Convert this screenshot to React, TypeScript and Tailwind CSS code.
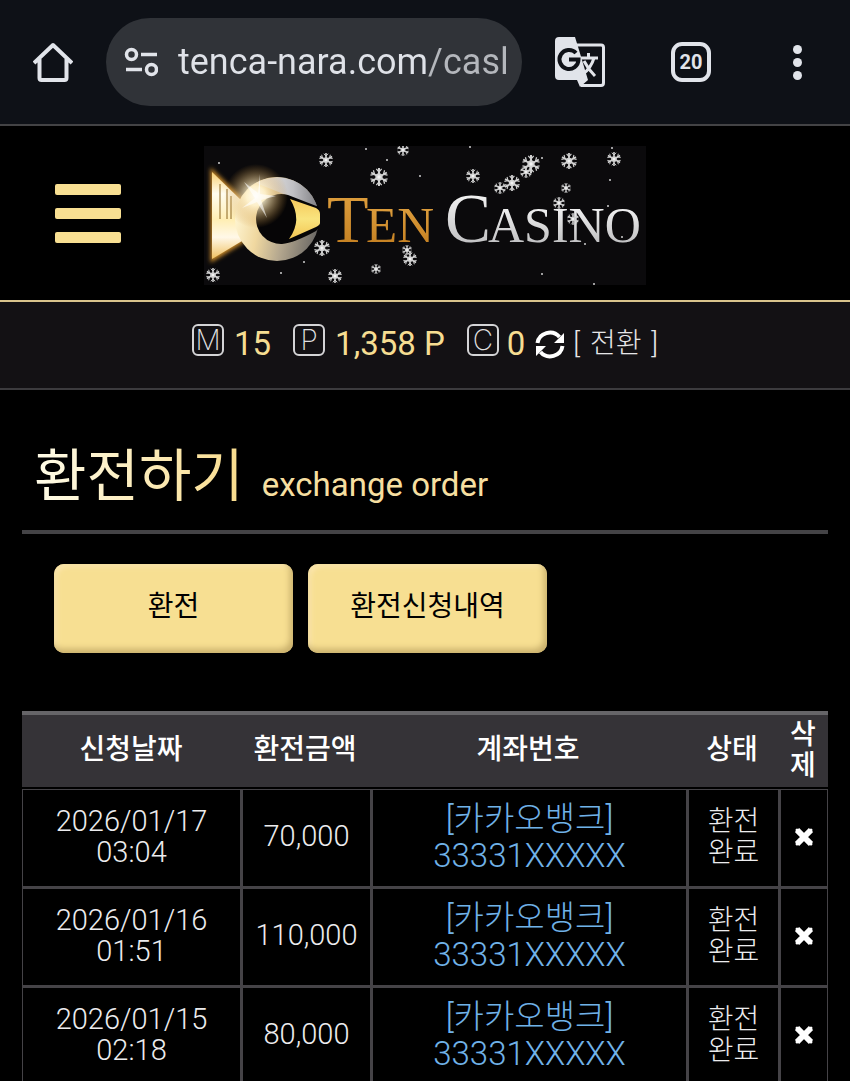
import React from 'react';

interface ExchangeOrder {
  id: number;
  date: string;
  time: string;
  amount: string;
  bank: string;
  account: string;
}

const orders: ExchangeOrder[] = [
  { id: 1, date: '2026/01/17', time: '03:04', amount: '70,000', bank: '[카카오뱅크]', account: '33331XXXXX' },
  { id: 2, date: '2026/01/16', time: '01:51', amount: '110,000', bank: '[카카오뱅크]', account: '33331XXXXX' },
  { id: 3, date: '2026/01/15', time: '02:18', amount: '80,000', bank: '[카카오뱅크]', account: '33331XXXXX' },
];

// x, y, radius
const flakes = [
  [122, 14, 7], [175, 31, 9], [199, 4, 6], [118, 102, 8], [9, 129, 7], [131, 130, 7],
  [172, 123, 5], [206, 113, 7], [203, 104, 5], [269, 30, 7], [308, 37, 8], [296, 42, 6],
  [327, 18, 9], [322, 26, 6], [365, 15, 8], [410, 13, 7], [362, 42, 5], [355, 57, 6], [369, 73, 6],
];

const dots = [
  [15, 17], [162, 3], [183, 14], [216, 30], [100, 116], [77, 127], [266, 1], [338, 12],
  [408, 2], [406, 34], [381, 98], [338, 128], [390, 138], [418, 91], [404, 60],
];

const Logo = () => (
  <svg viewBox="0 0 442 139" className="h-auto w-full max-w-[442px]" role="img" aria-label="Ten Casino">
    <defs>
      <linearGradient id="tail" x1="0" y1="0" x2="0" y2="1">
        <stop offset="0" stopColor="#f7cf72" />
        <stop offset="0.25" stopColor="#fffdf0" />
        <stop offset="0.55" stopColor="#ffeeb4" />
        <stop offset="0.75" stopColor="#fff8e8" />
        <stop offset="1" stopColor="#f0c060" />
      </linearGradient>
      <linearGradient id="ring" x1="0" y1="0.4" x2="1" y2="0.6">
        <stop offset="0" stopColor="#fff6d4" />
        <stop offset="0.3" stopColor="#f0d8a0" />
        <stop offset="0.6" stopColor="#b5a88f" />
        <stop offset="1" stopColor="#6b6865" />
      </linearGradient>
      <linearGradient id="steel" x1="0" y1="0" x2="1" y2="0">
        <stop offset="0" stopColor="#f4f2ee" />
        <stop offset="0.6" stopColor="#c0c0c4" />
        <stop offset="1" stopColor="#808084" />
      </linearGradient>
      <linearGradient id="eye" x1="0" y1="0" x2="0" y2="1">
        <stop offset="0" stopColor="#f6c95c" />
        <stop offset="0.5" stopColor="#f9e47e" />
        <stop offset="1" stopColor="#f3c653" />
      </linearGradient>
      <radialGradient id="shine">
        <stop offset="0" stopColor="#fff" />
        <stop offset="0.3" stopColor="#fff3cf" stopOpacity="0.9" />
        <stop offset="1" stopColor="#c98a2c" stopOpacity="0" />
      </radialGradient>
      <linearGradient id="gold" x1="0" y1="0" x2="0" y2="1">
        <stop offset="0" stopColor="#e3a544" />
        <stop offset="1" stopColor="#c07a1c" />
      </linearGradient>
      <linearGradient id="silver" x1="0" y1="0" x2="0" y2="1">
        <stop offset="0" stopColor="#fff" />
        <stop offset="1" stopColor="#b4b4b6" />
      </linearGradient>
      <filter id="glow" x="-20%" y="-20%" width="140%" height="140%">
        <feGaussianBlur stdDeviation="2" />
      </filter>
      <g id="flake" stroke="#d2d2d2" strokeWidth="0.22" fill="none">
        <path d="M0-1V1M-.87-.5 .87.5M-.87.5 .87-.5" />
        <path d="M-.3-.9 0-.55 .3-.9M-.3.9 0 .55 .3.9M-.95-.2-.5-.3-.62-.75M.95-.2.5-.3.62-.75M-.95.2-.5.3-.62.75M.95.2.5.3.62.75" strokeWidth="0.14" />
        <circle r="0.3" fill="#f2f2f2" />
      </g>
    </defs>
    <rect width="442" height="139" fill="#0b0a0c" />

    <path d="M8 25 38 54V96L8 114Z" fill="#c98a2c" stroke="#c98a2c" strokeWidth="3" filter="url(#glow)" />
    <path d="M8 26 38 55V95L8 113Z" fill="url(#tail)" />
    <path d="M16 38V73M23 43V73M27 50V73" stroke="#8a641e" strokeWidth="1" />
    <circle cx="73" cy="73" r="42" fill="url(#ring)" />
    <path d="M52 37A42 42 0 0 1 114 64L82 49Z" fill="url(#steel)" />
    <path d="M115 61 84 49A25 25 0 1 0 78 98Q90 97 112 85L115 82Z" fill="#060506" />
    <path d="M86 53 112 62Q116 64 116 68V77Q116 79 112 81L85 93Q99 74 86 53Z" fill="url(#eye)" />
    <ellipse cx="52" cy="50" rx="32" ry="32" fill="url(#shine)" opacity="0.9" />
    <path d="M56 28 56 48 72 50 57 54 63 72 53 56 38 62 51 52 40 36 54 47Z" fill="#fff" opacity="0.6" />

    <g fontFamily="'Liberation Serif', serif">
      <g fill="url(#gold)">
        <text x="123" y="96" fontSize="68">T</text>
        <text x="162" y="96" fontSize="51">EN</text>
      </g>
      <g fill="url(#silver)">
        <text x="241" y="96" fontSize="69">C</text>
        <text x="284" y="96" fontSize="50">ASINO</text>
      </g>
    </g>

    {flakes.map(([x, y, r]) => (
      <use key={`${x}-${y}`} href="#flake" transform={`translate(${x} ${y}) scale(${r})`} />
    ))}
    {dots.map(([x, y]) => (
      <circle key={`${x}-${y}`} cx={x} cy={y} r="1" fill="#cfcfcf" />
    ))}
  </svg>
);

const BrowserBar = () => (
  <div className="flex h-[126px] items-center border-b-2 border-[#434345] bg-[#0e1117] text-[#e1e4ea]">
    <button aria-label="Home" className="flex h-full w-[106px] shrink-0 items-center justify-center">
      <svg viewBox="0 0 40 40" className="size-10" fill="none" stroke="currentColor" strokeWidth="4" strokeLinejoin="round">
        <path d="M1 21 20 3 39 21M6.500 17V36Q6.500 38 8.500 38H31.500Q33.500 38 33.500 36V17" />
      </svg>
    </button>
    <label className="flex h-[88px] min-w-0 flex-1 items-center gap-5 rounded-full bg-[#303338] pr-4 pb-px pl-[18px]">
      <svg viewBox="0 0 34 30" className="h-[30px] w-[34px] shrink-0" fill="none" stroke="currentColor" strokeWidth="3.500">
        <circle cx="7.500" cy="7.500" r="5" />
        <path d="M17 7.500H33M2 22.500H18" />
        <circle cx="27.500" cy="22.500" r="5" />
      </svg>
      <input
        aria-label="Address"
        defaultValue="tenca-nara.com/casl"
        className="min-w-0 flex-1 bg-linear-to-r from-[#dfe2e8] from-[249px] to-[#b4b7bc] to-[249px] bg-clip-text font-['Roboto',sans-serif] text-[36px] text-transparent outline-none"
      />
    </label>
    <button aria-label="Translate" className="flex h-full w-[116px] shrink-0 items-center justify-center">
      <svg viewBox="0 0 50 50" className="size-[50px]">
        <path d="M20 8H46Q48.500 8 48.500 10.500V46Q48.500 48.500 46 48.500H26" fill="none" stroke="currentColor" strokeWidth="3" />
        <path d="M4 0H20L24 13 33 43 25 50 22 43H4Q0 43 0 39V4Q0 0 4 0Z" fill="currentColor" />
        <path d="M21 16A9.500 9.500 0 1 0 23.500 22.500H14" fill="none" stroke="#0e1117" strokeWidth="4" />
        <path d="M29 24 38 24 33 33Z" fill="#0e1117" />
        <path d="M26 21H43M33.500 16V21M39 21Q36 31 28 37M29 24Q33 32 40 39" fill="none" stroke="currentColor" strokeWidth="3" />
      </svg>
    </button>
    <button aria-label="Tabs" className="flex h-full w-[106px] shrink-0 items-center justify-center">
      <span className="flex size-10 items-center justify-center rounded-[11px] border-4 border-current font-['Roboto',sans-serif] text-xl font-bold">20</span>
    </button>
    <button aria-label="More" className="flex h-full w-[106px] shrink-0 flex-col items-center justify-center gap-1">
      <span className="size-[9px] rounded-full bg-current" />
      <span className="size-[9px] rounded-full bg-current" />
      <span className="size-[9px] rounded-full bg-current" />
    </button>
  </div>
);

const Badge = ({ letter }: { letter: string }) => (
  <span className="mb-2 flex size-8 items-center justify-center rounded-md border-2 border-[#d4d4d6] font-['Inter',sans-serif] text-[28px] leading-none font-extralight text-[#dededf]">
    {letter}
  </span>
);

const RefreshIcon = () => (
  <svg viewBox="0 0 30 30" className="size-[30px]">
    <path d="M2.500 14A12.500 12 0 0 1 24.500 8M27.500 17A12.500 12 0 0 1 5.500 23" fill="none" stroke="currentColor" strokeWidth="4" />
    <path d="M29 4V14H19ZM1 27V17H11Z" fill="currentColor" />
  </svg>
);

const DeleteIcon = () => (
  <svg viewBox="0 0 20 20" className="mx-auto size-5" stroke="currentColor" strokeWidth="6">
    <path d="M3 3 17 17M17 3 3 17" strokeLinecap="round" strokeWidth="3" />
    <path d="M3 3 17 17M17 3 3 17" />
  </svg>
);

export default function App() {
  return (
    <div className="h-screen overflow-x-hidden overflow-y-auto bg-black font-['Roboto','Noto_Sans_CJK_KR',sans-serif] text-white [scrollbar-width:none]">
      <BrowserBar />

      <header className="grid h-[176px] grid-cols-[1fr_auto_1fr] items-center border-b-2 border-[#d9c48c] bg-black pt-1">
        <button aria-label="Menu" className="mb-1 ml-[55px] flex w-[66px] flex-col gap-[13px]">
          <span className="h-[11px] rounded-xs bg-[#f8df92]" />
          <span className="h-[11px] rounded-xs bg-[#f8df92]" />
          <span className="h-[11px] rounded-xs bg-[#f8df92]" />
        </button>
        <a href="#home" className="block w-[442px]">
          <Logo />
        </a>
      </header>

      <div className="flex h-[88px] items-center justify-center border-b-2 border-[#3c3b3e] bg-[#131114] pb-0.5 text-[33px] text-[#f6dd92]">
        <Badge letter="M" />
        <span className="ml-[10px]">15</span>
        <span className="ml-[22px]"><Badge letter="P" /></span>
        <span className="ml-[10px]">1,358 P</span>
        <span className="ml-[22px]"><Badge letter="C" /></span>
        <span className="ml-2">0</span>
        <button aria-label="새로고침" className="ml-[10px] text-white">
          <RefreshIcon />
        </button>
        <button className="ml-2 text-[28px] font-light text-[#e6e6e8]">
          [ <span className="px-[3px]">전환</span> ]
        </button>
      </div>

      <main className="px-[22px]">
        <h1 className="flex h-36 items-baseline gap-[18px] border-b-4 border-[#444346] px-3 pt-11">
          <span className="bg-linear-to-r from-[#fffce8] to-[#f9dc8c] bg-clip-text text-[57px] text-transparent">환전하기</span>
          <span className="text-[33px] text-[#f6dfa0]">exchange order</span>
        </h1>

        <div className="flex gap-[15px] px-8 pt-[30px]">
          <button className="h-[89px] w-[239px] rounded-[10px] bg-[#f7df92] pb-1 text-[28px] text-black shadow-[inset_-3px_-4px_6px_#c9b06c,inset_3px_3px_5px_#fbe6ae]">
            환전
          </button>
          <button className="h-[89px] w-[239px] rounded-[10px] bg-[#f7df92] pb-1 text-[28px] text-black shadow-[inset_-3px_-4px_6px_#c9b06c,inset_3px_3px_5px_#fbe6ae]">
            환전신청내역
          </button>
        </div>

        <table className="mt-[58px] w-full table-fixed border-separate border-spacing-0 text-center text-[28px] leading-[31px]">
          <colgroup>
            <col className="w-[218px]" />
            <col className="w-[130px]" />
            <col />
            <col className="w-[92px]" />
            <col className="w-[50px]" />
          </colgroup>
          <thead>
            <tr className="h-[78px]">
              {['신청날짜', '환전금액', '계좌번호', '상태', '삭제'].map((title) => (
                <th key={title} className="border-t-4 border-b-2 border-t-[#666568] border-b-black bg-[#353337] px-2 pb-[3px] font-medium">
                  {title}
                </th>
              ))}
            </tr>
          </thead>
          <tbody className="font-light text-[#ececee] [&_td]:border-b-[3px] [&_td]:border-l-[3px] [&_td]:border-[#454347] [&_td]:pb-[3px] [&_td:first-child]:border-l [&_td:last-child]:border-r [&_tr:first-child_td]:border-t">
            {orders.map((order, i) => (
              <tr key={order.id} className={i === 0 ? 'h-[100px]' : 'h-[99px]'}>
                <td className="px-8 text-[29px]">{order.date} {order.time}</td>
                <td className="text-[29px]">{order.amount}</td>
                <td>
                  <a href="#account" className="block text-[33px] leading-[37px] text-[#70b2e8]">
                    {order.bank}
                    <br />
                    {order.account}
                  </a>
                </td>
                <td className="px-4">환전 완료</td>
                <td>
                  <button aria-label="삭제" className="block w-full text-white">
                    <DeleteIcon />
                  </button>
                </td>
              </tr>
            ))}
          </tbody>
        </table>
      </main>
    </div>
  );
}
